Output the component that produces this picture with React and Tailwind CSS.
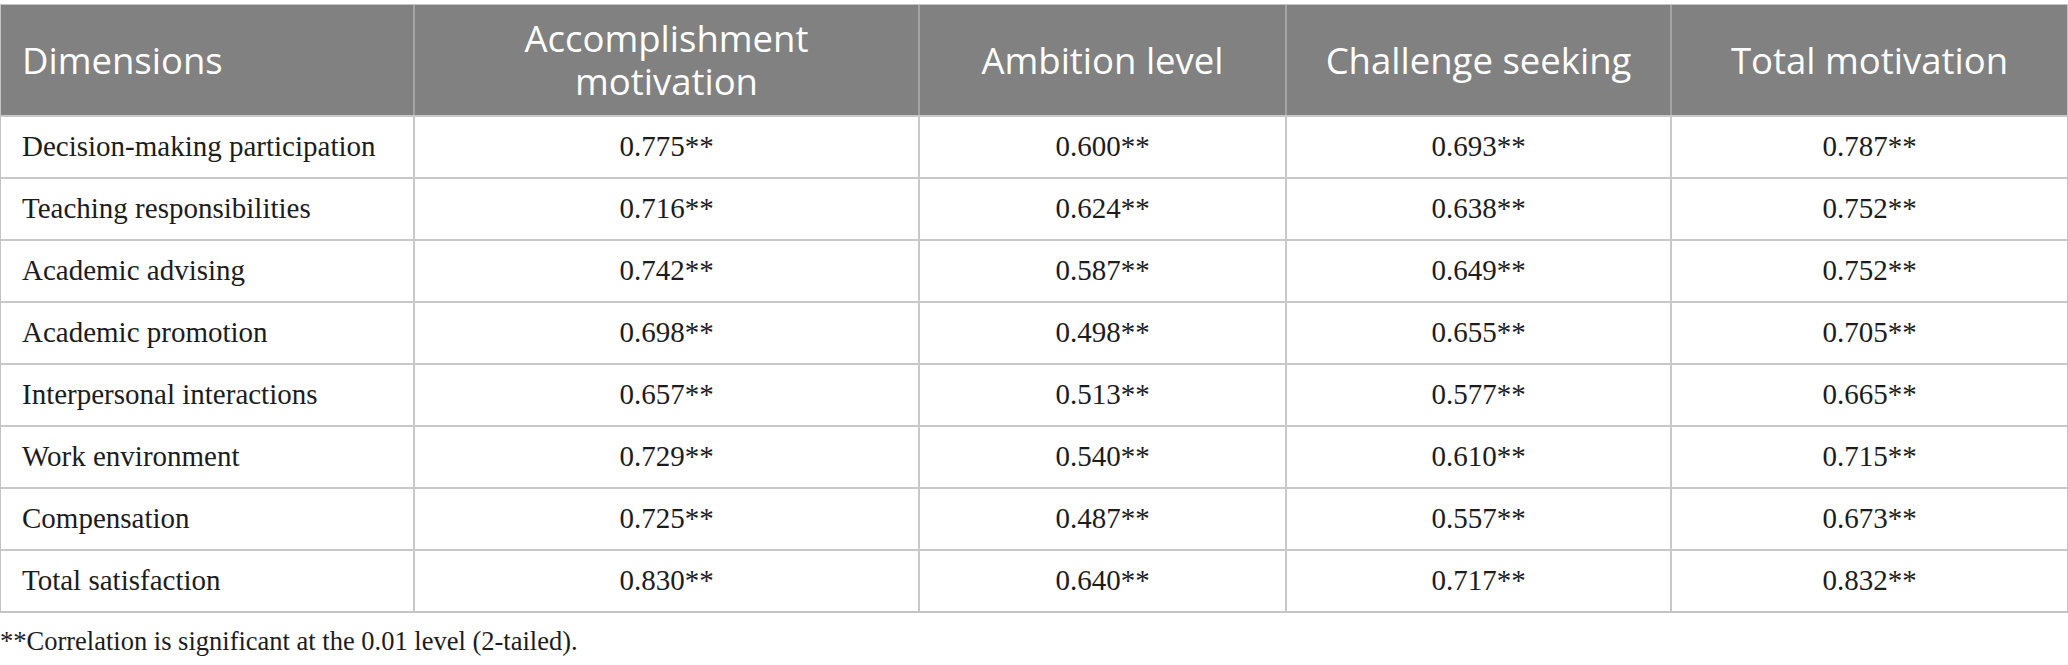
const headers = ["Accomplishment motivation", "Ambition level", "Challenge seeking", "Total motivation"];

const rows = [
  ["Decision-making participation", "0.775**", "0.600**", "0.693**", "0.787**"],
  ["Teaching responsibilities", "0.716**", "0.624**", "0.638**", "0.752**"],
  ["Academic advising", "0.742**", "0.587**", "0.649**", "0.752**"],
  ["Academic promotion", "0.698**", "0.498**", "0.655**", "0.705**"],
  ["Interpersonal interactions", "0.657**", "0.513**", "0.577**", "0.665**"],
  ["Work environment", "0.729**", "0.540**", "0.610**", "0.715**"],
  ["Compensation", "0.725**", "0.487**", "0.557**", "0.673**"],
  ["Total satisfaction", "0.830**", "0.640**", "0.717**", "0.832**"],
];

const cols = "grid grid-cols-[414px_505px_367px_385px_1fr]";

export default function App() {
  return (
    <div className="w-[2068px] h-[665px] bg-white pt-[4px]">
      <div className="border border-[#c4c4c4] border-b-2">
        {/* шапка */}
        <div className={`${cols} h-[110px] bg-[#808180] text-white font-['Open_Sans',sans-serif] text-[36.5px] leading-[43px]`}>
          <div className="flex items-center pl-[21px] border-r-2 border-[#a3a4a3]">Dimensions</div>
          {headers.map((h, i) => (
            <div
              key={h}
              className={`flex items-center justify-center text-center px-4 ${i < 3 ? "border-r-2 border-[#a3a4a3]" : ""}`}
            >
              {i === 0 ? (
                <span>Accomplishment<br />motivation</span>
              ) : (
                h
              )}
            </div>
          ))}
        </div>
        {rows.map((r) => (
          <div
            key={r[0]}
            className={`${cols} h-[62px] font-['Liberation_Serif',serif] text-[29px] text-[#1c1c1c] border-t-2 border-[#c8c8c8]`}
          >
            {r.map((c, ci) => (
              <div
                key={ci}
                className={`flex items-center ${ci === 0 ? "pl-[21px]" : "justify-center"} ${ci < 4 ? "border-r-2 border-[#c8c8c8]" : ""}`}
              >
                {c}
              </div>
            ))}
          </div>
        ))}
      </div>
      <p className="mt-[15px] font-['Liberation_Serif',serif] text-[26.5px] text-[#1c1c1c] leading-none">
        **Correlation is significant at the 0.01 level (2-tailed).
      </p>
    </div>
  );
}
